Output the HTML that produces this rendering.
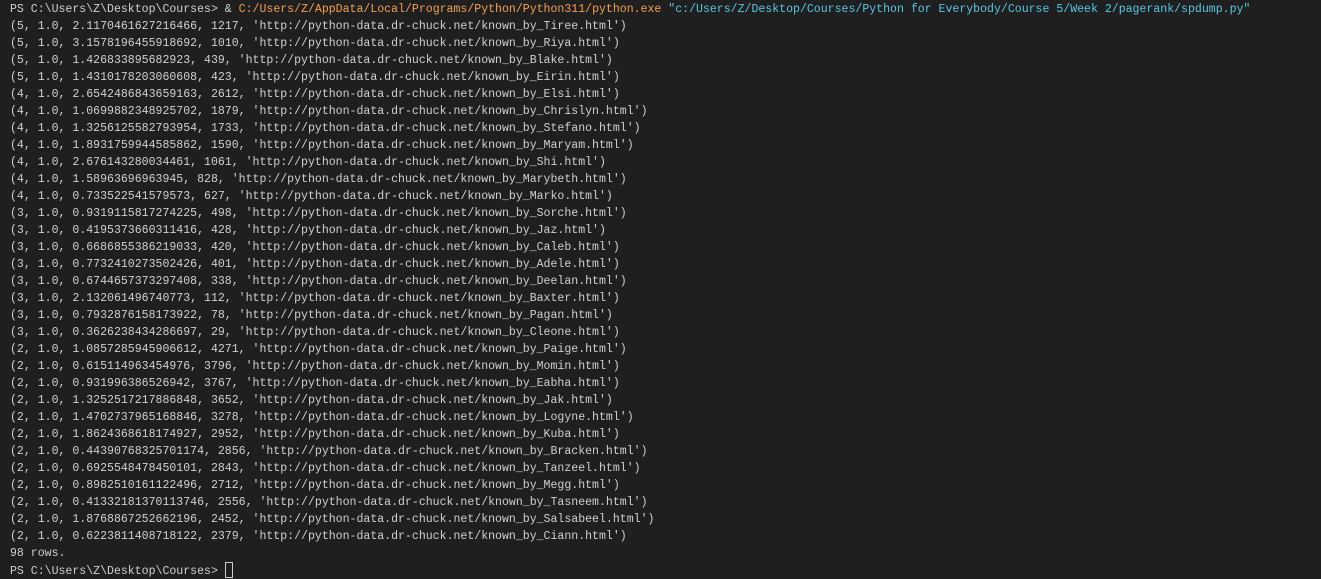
<!DOCTYPE html>
<html><head><meta charset="utf-8"><style>
html,body{margin:0;padding:0;background:#1f1f1f;width:1321px;height:579px;overflow:hidden}
pre{margin:0;padding:1px 0 0 10px;font-family:"Liberation Mono",monospace;font-size:11.55px;line-height:17px;color:#d0d0d0;white-space:pre}
.o{color:#f2a04d}.c{color:#56c8e0}
.cur{display:inline-block;width:8px;height:16px;border:1px solid #cccccc;vertical-align:-4px;box-sizing:border-box}
</style></head><body><pre>PS C:\Users\Z\Desktop\Courses&gt; &amp; <span class="o">C:/Users/Z/AppData/Local/Programs/Python/Python311/python.exe</span> <span class="c">"c:/Users/Z/Desktop/Courses/Python for Everybody/Course 5/Week 2/pagerank/spdump.py"</span>
(5, 1.0, 2.1170461627216466, 1217, 'http://python-data.dr-chuck.net/known_by_Tiree.html')
(5, 1.0, 3.1578196455918692, 1010, 'http://python-data.dr-chuck.net/known_by_Riya.html')
(5, 1.0, 1.426833895682923, 439, 'http://python-data.dr-chuck.net/known_by_Blake.html')
(5, 1.0, 1.4310178203060608, 423, 'http://python-data.dr-chuck.net/known_by_Eirin.html')
(4, 1.0, 2.6542486843659163, 2612, 'http://python-data.dr-chuck.net/known_by_Elsi.html')
(4, 1.0, 1.0699882348925702, 1879, 'http://python-data.dr-chuck.net/known_by_Chrislyn.html')
(4, 1.0, 1.3256125582793954, 1733, 'http://python-data.dr-chuck.net/known_by_Stefano.html')
(4, 1.0, 1.8931759944585862, 1590, 'http://python-data.dr-chuck.net/known_by_Maryam.html')
(4, 1.0, 2.676143280034461, 1061, 'http://python-data.dr-chuck.net/known_by_Shi.html')
(4, 1.0, 1.58963696963945, 828, 'http://python-data.dr-chuck.net/known_by_Marybeth.html')
(4, 1.0, 0.733522541579573, 627, 'http://python-data.dr-chuck.net/known_by_Marko.html')
(3, 1.0, 0.9319115817274225, 498, 'http://python-data.dr-chuck.net/known_by_Sorche.html')
(3, 1.0, 0.4195373660311416, 428, 'http://python-data.dr-chuck.net/known_by_Jaz.html')
(3, 1.0, 0.6686855386219033, 420, 'http://python-data.dr-chuck.net/known_by_Caleb.html')
(3, 1.0, 0.7732410273502426, 401, 'http://python-data.dr-chuck.net/known_by_Adele.html')
(3, 1.0, 0.6744657373297408, 338, 'http://python-data.dr-chuck.net/known_by_Deelan.html')
(3, 1.0, 2.132061496740773, 112, 'http://python-data.dr-chuck.net/known_by_Baxter.html')
(3, 1.0, 0.7932876158173922, 78, 'http://python-data.dr-chuck.net/known_by_Pagan.html')
(3, 1.0, 0.3626238434286697, 29, 'http://python-data.dr-chuck.net/known_by_Cleone.html')
(2, 1.0, 1.0857285945906612, 4271, 'http://python-data.dr-chuck.net/known_by_Paige.html')
(2, 1.0, 0.615114963454976, 3796, 'http://python-data.dr-chuck.net/known_by_Momin.html')
(2, 1.0, 0.931996386526942, 3767, 'http://python-data.dr-chuck.net/known_by_Eabha.html')
(2, 1.0, 1.3252517217886848, 3652, 'http://python-data.dr-chuck.net/known_by_Jak.html')
(2, 1.0, 1.4702737965168846, 3278, 'http://python-data.dr-chuck.net/known_by_Logyne.html')
(2, 1.0, 1.8624368618174927, 2952, 'http://python-data.dr-chuck.net/known_by_Kuba.html')
(2, 1.0, 0.44390768325701174, 2856, 'http://python-data.dr-chuck.net/known_by_Bracken.html')
(2, 1.0, 0.6925548478450101, 2843, 'http://python-data.dr-chuck.net/known_by_Tanzeel.html')
(2, 1.0, 0.8982510161122496, 2712, 'http://python-data.dr-chuck.net/known_by_Megg.html')
(2, 1.0, 0.41332181370113746, 2556, 'http://python-data.dr-chuck.net/known_by_Tasneem.html')
(2, 1.0, 1.8768867252662196, 2452, 'http://python-data.dr-chuck.net/known_by_Salsabeel.html')
(2, 1.0, 0.6223811408718122, 2379, 'http://python-data.dr-chuck.net/known_by_Ciann.html')
98 rows.
PS C:\Users\Z\Desktop\Courses&gt; <span class="cur"></span></pre></body></html>
